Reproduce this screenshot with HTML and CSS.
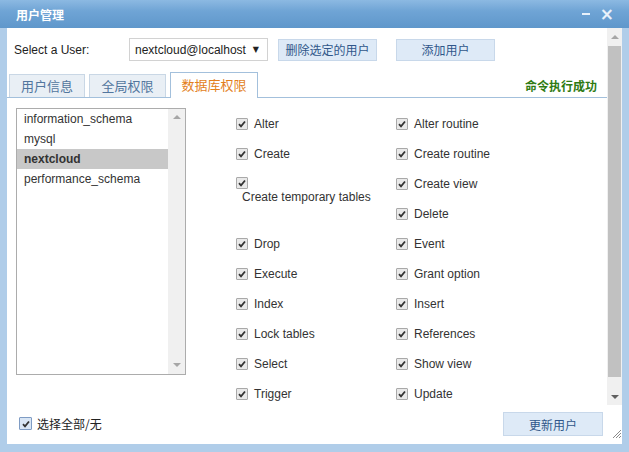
FILE: index.html
```html
<!DOCTYPE html>
<html>
<head>
<meta charset="utf-8">
<link rel="stylesheet" href="styles.css">
</head>
<body>
<div class="window">
  <div class="titlebar">
    <span class="title">用户管理</span>
    <span class="tb-btns"><span class="tb-min"></span><span class="tb-close">×</span></span>
  </div>
  <div class="frame">
    <div class="main">
      <div class="content">
        <div class="userrow">
          <span class="user-label">Select a User:</span>
          <div class="select"><span>nextcloud@localhost</span><span class="caret">▼</span></div>
          <button class="btn btn-del">删除选定的用户</button>
          <button class="btn btn-add">添加用户</button>
        </div>
        <div class="tabs">
          <div class="tab">用户信息</div>
          <div class="tab">全局权限</div>
          <div class="tab active">数据库权限</div>
          <div class="status">命令执行成功</div>
        </div>
        <div class="panel">
          <div class="dblist">
            <ul class="items">
              <li>information_schema</li>
              <li>mysql</li>
              <li class="sel">nextcloud</li>
              <li>performance_schema</li>
            </ul>
            <div class="lscroll"><span class="tri-up"></span><span class="tri-down"></span></div>
          </div>
          <div class="privs">
            <label class="priv"><span class="cb"></span>Alter</label>
            <label class="priv"><span class="cb"></span>Alter routine</label>
            <label class="priv"><span class="cb"></span>Create</label>
            <label class="priv"><span class="cb"></span>Create routine</label>
            <label class="priv tall"><span class="cb"></span><span class="wraptext">Create temporary tables</span></label>
            <label class="priv"><span class="cb"></span>Create view</label>
            <label class="priv"><span class="cb"></span>Delete</label>
            <label class="priv"><span class="cb"></span>Drop</label>
            <label class="priv"><span class="cb"></span>Event</label>
            <label class="priv"><span class="cb"></span>Execute</label>
            <label class="priv"><span class="cb"></span>Grant option</label>
            <label class="priv"><span class="cb"></span>Index</label>
            <label class="priv"><span class="cb"></span>Insert</label>
            <label class="priv"><span class="cb"></span>Lock tables</label>
            <label class="priv"><span class="cb"></span>References</label>
            <label class="priv"><span class="cb"></span>Select</label>
            <label class="priv"><span class="cb"></span>Show view</label>
            <label class="priv"><span class="cb"></span>Trigger</label>
            <label class="priv"><span class="cb"></span>Update</label>
          </div>
        </div>
      </div>
      <div class="vscroll">
        <div class="vs-btn"><span class="tri-up"></span></div>
        <div class="thumb"></div>
        <div class="vs-track"></div>
        <div class="vs-btn vs-down"><span class="tri-down dark"></span></div>
      </div>
    </div>
    <div class="footer">
      <label class="selall"><span class="cb blue"></span>选择全部/无</label>
      <button class="btn btn-update">更新用户</button>
      <svg class="grip" width="12" height="12" viewBox="0 0 12 12">
        <path d="M11 3 L3 11 M11 6 L6 11 M11 9 L9 11" stroke="#8a8a8a" stroke-width="1" fill="none"/>
      </svg>
    </div>
  </div>
</div>
</body>
</html>
```

FILE: styles.css
```css
* { box-sizing: border-box; }
html, body { margin: 0; padding: 0; }
body {
  font-family: "Liberation Sans", "Noto Sans CJK SC", sans-serif;
  font-size: 12px;
  color: #333;
  background: #fff;
}
.window {
  width: 629px;
  height: 452px;
  display: flex;
  flex-direction: column;
  background: #b0cde9;
}
.titlebar {
  height: 28px;
  flex: none;
  display: flex;
  align-items: center;
  padding: 0 15px 0 16px;
  background: linear-gradient(#8cb9e2 0%, #6fa4d5 40%, #5f97cb 100%);
  color: #fff;
  font-family: "Noto Sans CJK SC", sans-serif;
  font-weight: bold;
}
.title { font-size: 12px; }
.tb-btns {
  margin-left: auto;
  display: flex;
  align-items: center;
  gap: 10px;
}
.tb-min {
  display: block;
  width: 8px;
  height: 2px;
  background: #e8f1fa;
}
.tb-close {
  font-family: "DejaVu Sans", sans-serif;
  font-size: 17px;
  line-height: 17px;
  font-weight: bold;
  color: #e8f1fa;
}
.frame {
  flex: 1;
  display: flex;
  flex-direction: column;
  margin: 0 7px 8px 7px;
  background: #fff;
}
.main {
  height: 377px;
  display: flex;
}
.content { flex: 1; }

.userrow {
  display: flex;
  align-items: center;
  padding: 10px 0 0 7px;
}
.user-label { width: 115px; color: #222; }
.select {
  width: 139px;
  height: 23px;
  border: 1px solid #d2d2d2;
  display: flex;
  align-items: center;
  padding: 0 8px 0 5px;
  color: #222;
}
.caret {
  margin-left: auto;
  font-family: "DejaVu Sans", sans-serif;
  font-size: 8px;
  color: #222;
}
.btn {
  height: 22px;
  width: 99px;
  border: 1px solid #c8d8ea;
  background: #deeaf7;
  color: #30578a;
  font-family: "Noto Sans CJK SC", sans-serif;
  font-size: 12px;
  padding: 0;
}
.btn-del { margin-left: 10px; }
.btn-add { margin-left: 19px; }

.tabs {
  display: flex;
  align-items: flex-end;
  margin-top: 12px;
  height: 25px;
  border-bottom: 1px solid #a3c0dc;
  padding-left: 2px;
  gap: 4px;
  font-family: "Noto Sans CJK SC", sans-serif;
}
.tab {
  height: 23px;
  width: 76px;
  border: 1px solid #c9d7e5;
  border-bottom: none;
  background: #e9eff5;
  color: #52769e;
  display: flex;
  align-items: center;
  justify-content: center;
  font-size: 13px;
  padding-bottom: 2px;
}
.tab:nth-child(2) { width: 77px; }
.tab.active {
  width: 88px;
  height: 26px;
  margin-bottom: -1px;
  background: #fff;
  border-color: #a3c0dc;
  color: #e37f1c;
}
.status {
  margin-left: auto;
  align-self: center;
  padding-right: 10px;
  color: #2e7a12;
  font-weight: bold;
  font-size: 12px;
}

.panel {
  display: flex;
  padding: 10px 0 0 9px;
}
.dblist {
  width: 170px;
  height: 267px;
  border: 1px solid #acacac;
  display: flex;
}
.items {
  list-style: none;
  margin: 0;
  padding: 0;
  flex: 1;
}
.items li {
  height: 20px;
  line-height: 21px;
  padding-left: 7px;
  color: #333;
}
.items li.sel {
  background: #c8c8c8;
  font-weight: bold;
}
.lscroll {
  width: 17px;
  background: #f0f0f0;
  display: flex;
  flex-direction: column;
  align-items: center;
  justify-content: space-between;
  padding: 6px 0 7px;
}
.tri-up, .tri-down {
  display: block;
  width: 0;
  height: 0;
  border-left: 4px solid transparent;
  border-right: 4px solid transparent;
}
.tri-up { border-bottom: 4px solid #a6a6a6; }
.tri-down { border-top: 4px solid #a6a6a6; }
.tri-down.dark { border-top-color: #606060; }

.privs {
  margin-left: 50px;
  display: grid;
  grid-template-columns: 160px 160px;
  grid-auto-rows: 30px;
}
.priv {
  display: flex;
  align-items: center;
  gap: 6px;
  color: #333;
  padding-top: 1px;
}
.priv.tall {
  grid-row: span 2;
  display: block;
  padding-top: 9px;
  line-height: 14px;
}
.priv.tall .cb { display: block; }
.wraptext { display: block; padding-left: 6px; padding-top: 1px; }

.cb {
  flex: none;
  width: 12px;
  height: 12px;
  border: 1px solid #a9a9a9;
  border-radius: 1px;
  background-color: #e9e9e9;
  background-image: url("data:image/svg+xml,%3Csvg xmlns='http://www.w3.org/2000/svg' width='10' height='10' viewBox='0 0 10 10'%3E%3Cpath d='M2 5.2 L4 7.3 L8 2.5' stroke='%23333' stroke-width='1.8' fill='none'/%3E%3C/svg%3E");
  background-repeat: no-repeat;
  background-position: center;
}
.cb.blue {
  width: 13px;
  height: 13px;
  border-color: #7f9cc4;
  background-color: #d9e6f5;
}

.vscroll {
  width: 15px;
  display: flex;
  flex-direction: column;
  background: #f0f0f0;
}
.vs-btn {
  height: 18px;
  display: flex;
  align-items: center;
  justify-content: center;
}
.vs-down { height: 17px; }
.thumb {
  height: 331px;
  margin: 0 1px;
  background: #c1c1c1;
}
.vs-track { flex: 1; }

.footer {
  flex: 1;
  display: flex;
  align-items: flex-start;
}
.selall {
  display: flex;
  align-items: center;
  gap: 5px;
  margin: 10px 0 0 12px;
  font-family: "Noto Sans CJK SC", sans-serif;
  color: #222;
}
.btn-update {
  margin: 7px 0 0 auto;
  width: 100px;
  height: 24px;
}
.grip {
  align-self: flex-end;
  margin: 0 0 5px 7px;
}
```
